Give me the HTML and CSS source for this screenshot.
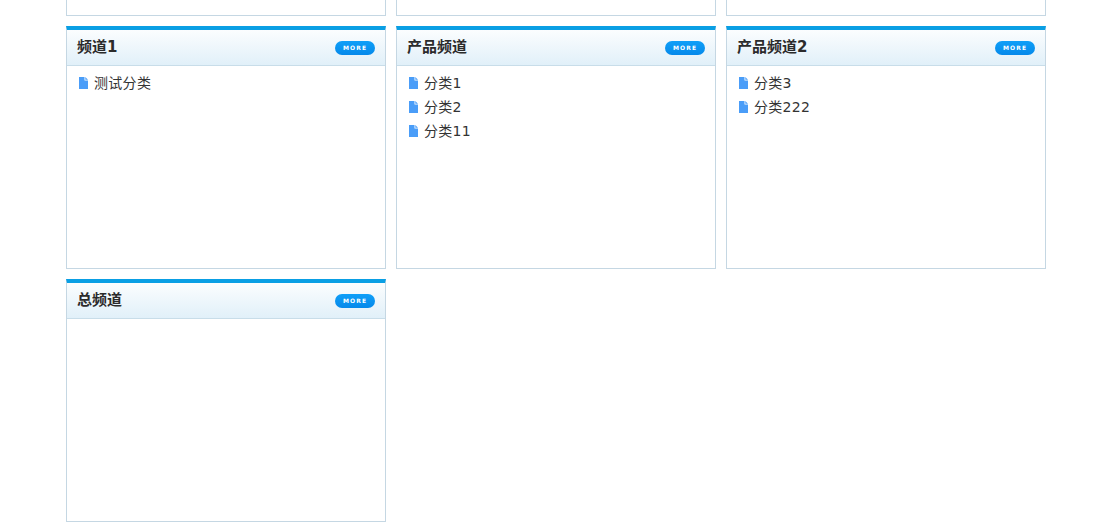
FILE: index.html
```html
<!DOCTYPE html>
<html lang="zh">
<head>
<meta charset="utf-8">
<title>频道</title>
<link rel="stylesheet" href="styles.css">
</head>
<body>
<svg class="defs" width="0" height="0" aria-hidden="true"><symbol id="file" viewBox="0 0 9 12"><path d="M0 0H5.5V3.5H9V12H0Z" fill="#4a9df8"/><path d="M6.3 0L9 2.7H6.3Z" fill="#4a9df8"/></symbol></svg>
<main class="grid">
  <section class="card"></section>
  <section class="card"></section>
  <section class="card"></section>
  <section class="card">
    <header class="head"><h2 class="title">频道1</h2><a class="more">MORE</a></header>
    <ul class="list">
      <li class="item"><svg class="ico"><use href="#file"/></svg>测试分类</li>
    </ul>
  </section>
  <section class="card">
    <header class="head"><h2 class="title">产品频道</h2><a class="more">MORE</a></header>
    <ul class="list">
      <li class="item"><svg class="ico"><use href="#file"/></svg>分类1</li>
      <li class="item"><svg class="ico"><use href="#file"/></svg>分类2</li>
      <li class="item"><svg class="ico"><use href="#file"/></svg>分类11</li>
    </ul>
  </section>
  <section class="card">
    <header class="head"><h2 class="title">产品频道2</h2><a class="more">MORE</a></header>
    <ul class="list">
      <li class="item"><svg class="ico"><use href="#file"/></svg>分类3</li>
      <li class="item"><svg class="ico"><use href="#file"/></svg>分类222</li>
    </ul>
  </section>
  <section class="card">
    <header class="head"><h2 class="title">总频道</h2><a class="more">MORE</a></header>
    <ul class="list"></ul>
  </section>
</main>
</body>
</html>
```
FILE: styles.css
```css
html, body {
  margin: 0;
  padding: 0;
  height: 532px;
  overflow: hidden;
  background: #fff;
}
body {
  font-family: "DejaVu Sans", "Noto Sans CJK SC", sans-serif;
  color: #333;
}
.defs { display: block; height: 0; }
.grid {
  display: grid;
  grid-template-columns: repeat(3, 320px);
  grid-auto-rows: 243px;
  gap: 10px;
  margin: -227px 0 0 66px;
}
.card {
  box-sizing: border-box;
  border: 1px solid #c5d7e3;
  background: #fff;
  min-width: 0;
}
.card:has(.head) { border-top: 4px solid #0a9fe4; }
.head {
  display: flex;
  align-items: center;
  justify-content: space-between;
  box-sizing: border-box;
  height: 36px;
  padding: 0 10px;
  border-bottom: 1px solid #c8dde9;
  background: linear-gradient(#fbfdfe, #e1f0f9);
}
.title {
  margin: 0;
  font-size: 15px;
  line-height: 35px;
  font-weight: 700;
  color: #2b2b2b;
}
.more {
  width: 40px;
  height: 14px;
  border-radius: 7px;
  background: linear-gradient(#0f9ff8, #0689ea);
  color: #fff;
  font-size: 6px;
  font-weight: 700;
  line-height: 13px;
  letter-spacing: 1.1px;
  text-align: center;
}
.list {
  list-style: none;
  margin: 0;
  padding: 5px 0 0 12px;
}
.item {
  display: flex;
  align-items: center;
  gap: 6px;
  height: 24px;
  font-size: 14px;
  line-height: 24px;
  letter-spacing: 0.3px;
  color: #333;
}
.ico {
  width: 9px;
  height: 12px;
  flex: none;
}
```
